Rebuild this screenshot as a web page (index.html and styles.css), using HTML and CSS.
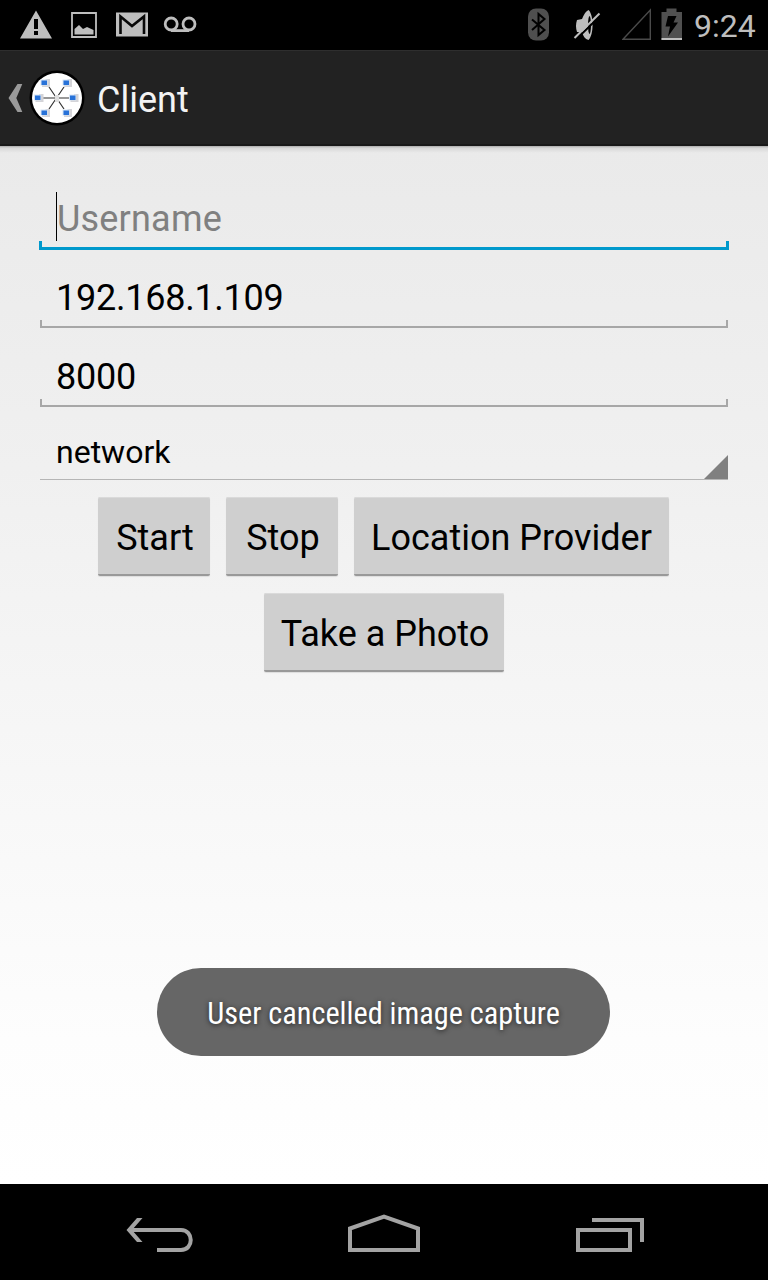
FILE: index.html
```
<!DOCTYPE html>
<html lang="en">
<head>
<meta charset="utf-8">
<title>Client</title>
<link rel="stylesheet" href="styles.css">
</head>
<body>
<div class="screen">
  <header class="status-bar">
    <div class="notifications">
      <svg width="34" height="50" viewBox="19 0 34 50"><path fill="#bebebe" fill-rule="evenodd" d="M36 10.500 52 38.500H20ZM34 19v10h4V19ZM34 31v4h4v-4Z"/></svg>
      <svg width="28" height="50" viewBox="70 0 28 50"><path fill="none" stroke="#bebebe" stroke-width="1.800" d="M72 13h24v24H72Z"/><path fill="#bebebe" d="M74.500 34.500V29l4.500-4 4 4 4-2 6.500 3v4.500Z"/></svg>
      <svg width="34" height="50" viewBox="115 0 34 50"><path fill="#bebebe" d="M116 12.500h32v24h-32Z"/><path fill="none" stroke="#080808" stroke-width="2.600" d="M120.500 34V16.500L132 26l12-9.500V34"/></svg>
      <svg width="34" height="50" viewBox="163 0 34 50"><g fill="none" stroke="#bebebe" stroke-width="2.800"><circle cx="171.200" cy="24" r="6"/><circle cx="189" cy="24" r="6"/><path d="M171 30.600h18"/></g></svg>
    </div>
    <div class="system">
      <svg width="22" height="50" viewBox="528 0 22 50"><rect x="528" y="8.500" width="21" height="32" rx="8" fill="#4f4f4f"/><path fill="none" stroke="#000" stroke-width="2" d="m532 19.500 12.500 10.500-6 5V14l6 5-12.500 11"/></svg>
      <svg width="28" height="50" viewBox="573 0 28 50"><path fill="#bebebe" d="M577 20l5-1c2-5 4-8 6.500-9 5.500 5 5.500 25 0 30-3.500-1-5.500-4-6.500-8h-5q-2-6 0-12Z"/><ellipse cx="589.500" cy="25" rx="1.500" ry="9" fill="#000"/><path stroke="#000" stroke-width="2" d="m576 39.500 25-24.500"/><path stroke="#bebebe" stroke-width="2" d="m574.500 38 25-24.500"/></svg>
      <svg width="30" height="50" viewBox="622 0 30 50"><path fill="none" stroke="#4a4a4a" stroke-width="1.400" d="M623 39.300 650.300 10v29.300Z"/></svg>
      <svg width="22" height="50" viewBox="661 0 22 50"><path fill="#505050" d="M661.500 12h5V8.500h10V12h5.500v28h-20.500Z"/><path fill="#bebebe" d="M661.500 38h20.500v2h-20.500Z"/><path fill="#000" d="M668 16h8.500l-3 6.500h4.500L668 36.500l2-10h-4.500Z"/></svg>
      <span class="clock">9:24</span>
    </div>
  </header>
  <div class="action-bar">
    <svg class="up" width="16" height="32" viewBox="8 82 16 32"><path fill="#9a9a9a" d="M17.500 84h4.800l-6 14 6 14h-4.800L8.500 98Z"/></svg>
    <svg class="logo" width="56" height="56" viewBox="0 0 56 56">
      <defs>
        <g id="pc"><path fill="#d4d4d8" d="M0-4h4.500v8h-8V2H0Z"/><path fill="#d7e5f5" d="M-5-3.500h7v6h-7Z"/><path fill="#2872d8" d="M-4-2.500h5.500v4.500h-5.500Z"/></g>
      </defs>
      <circle cx="28" cy="28" r="27.500" fill="#000"/><circle cx="28" cy="28" r="25" fill="#fff"/>
      <path fill="none" stroke="#333" stroke-width="1.200" d="M13 28h29M20 17l15 22M35 17 20 39"/>
      <path fill="#dedede" d="M26 25h4v7h-4Z"/>
      <use href="#pc" x="16.500" y="13"/><use href="#pc" x="38.500" y="13"/><use href="#pc" x="10" y="28"/><use href="#pc" x="45" y="28"/><use href="#pc" x="16.500" y="43"/><use href="#pc" x="38.500" y="43"/>
    </svg>
    <h1 class="title">Client</h1>
  </div>
  <main class="content">
    <div class="field focused"><span class="value"><i class="caret"></i><span class="hint">Username</span></span><div class="line"></div></div>
    <div class="field address"><span class="value ip">192.168.1.109</span><div class="line"></div></div>
    <div class="field"><span class="value port">8000</span><div class="line"></div></div>
    <div class="spinner"><span class="choice">network</span><svg width="24" height="24" viewBox="0 0 24 24"><path fill="#808080" d="M24 0v24H0Z"/></svg></div>
    <div class="buttons">
      <button class="btn small">Start</button>
      <button class="btn small">Stop</button>
      <button class="btn provider">Location Provider</button>
    </div>
    <div class="buttons second"><button class="btn photo">Take a Photo</button></div>
    <div class="toast"><span class="toast-text">User cancelled image capture</span></div>
  </main>
  <nav class="nav-bar">
    <svg width="68" height="40" viewBox="126 1215 68 40"><path fill="none" stroke="#a3a3a3" stroke-width="4" d="M129 1230h52c13 0 13 20 0 20h-24"/><path fill="#a3a3a3" d="M137 1218h5.500l-10.500 12 10.500 12H137l-10.500-12Z"/></svg>
    <svg width="72" height="40" viewBox="348 1213 72 40"><path fill="none" stroke="#a3a3a3" stroke-width="4" d="M350 1250v-21.500l34-12 34 12v21.500Z"/></svg>
    <svg width="68" height="40" viewBox="576 1215 68 40"><path fill="none" stroke="#a3a3a3" stroke-width="4" d="M578 1230h52v20h-52ZM592 1220h50v22"/></svg>
  </nav>
</div>
</body>
</html>
```
FILE: styles.css
```
* { box-sizing: border-box; }
body { margin: 0; font-family: Roboto, "Noto Sans", sans-serif; }
svg { display: block; flex: none; }
.screen { width: 768px; height: 1280px; display: flex; flex-direction: column; overflow: hidden; }
.status-bar { height: 50px; flex: none; background: #000; display: flex; justify-content: space-between; padding: 0 12px 0 19px; }
.notifications { display: flex; }
.notifications svg:nth-child(2) { margin-left: 17px; }
.notifications svg:nth-child(3) { margin-left: 17px; }
.notifications svg:nth-child(4) { margin-left: 14px; }
.system { display: flex; width: 228px; }
.system svg:nth-child(2) { margin-left: 23px; }
.system svg:nth-child(3) { margin-left: 21px; }
.system svg:nth-child(4) { margin-left: 9px; }
.clock { color: #bebebe; font-size: 32px; line-height: 52px; margin-left: 11px; white-space: nowrap; }
.action-bar { height: 96px; flex: none; display: flex; align-items: center; padding: 0 0 0 8px; background: #222; border-top: 1px solid #2e2e2e; border-bottom: 2px solid #191919; }
.logo { margin-left: 5px; }
.title { margin: 5px 0 0 12px; color: #f3f3f3; font-weight: 400; font-size: 36px; line-height: 44px; }
.content { flex: 1; display: flex; flex-direction: column; padding: 25px 40px 0; background: linear-gradient(#aaa 0, #d8d8d8 2px, rgba(230,230,230,0) 7px), linear-gradient(#eaeaea 0, #f0f0f0 31%, #f6f6f6 56%, #fdfdfd 86%, #fff); }
.field { height: 79px; flex: none; display: flex; flex-direction: column; justify-content: flex-end; color: #000; font-size: 36px; }
.address { height: 78px; }
.value { height: 48px; line-height: 52px; padding-left: 16px; display: flex; white-space: nowrap; }
.ip { letter-spacing: -0.25px; }
.port { letter-spacing: -0.2px; }
.line { height: 8px; border: solid #a7a7a7; border-width: 0 2px 2px; }
.focused .line { height: 9px; margin: 0 -1px; border-color: #0099cc; border-width: 0 3px 3px; }
.focused .value { height: 50px; line-height: 56px; }
.caret { width: 1px; height: 49px; margin-top: 1px; background: #000; }
.hint { color: #808080; letter-spacing: 0.2px; }
.spinner { height: 73px; flex: none; display: flex; justify-content: space-between; align-items: flex-end; border-bottom: 1px solid #b5b5b5; }
.choice { padding: 0 0 7px 16px; font-size: 32px; line-height: 40px; color: #000; }
.buttons { display: flex; justify-content: center; gap: 16px; padding: 17px 1px 0 0; }
.second { padding-right: 0; }
.btn { height: 79px; padding: 4px 0 0; border: 0; border-bottom: 2px solid #999; border-radius: 2px; background: #cfcfcf; box-shadow: 0 1px 1px #ddd, inset 0 1px #dadada; font: 36px/44px Roboto, sans-serif; color: #000; white-space: nowrap; }
.small { width: 112px; padding-left: 2px; }
.provider { width: 315px; }
.photo { width: 240px; padding-left: 2px; }
.toast { width: 453px; height: 88px; margin: 296px 0 0 117px; border-radius: 44px; background: #666; color: #fff; display: flex; align-items: center; justify-content: center; }
.toast-text { font-family: "Roboto Condensed", Roboto, sans-serif; font-stretch: condensed; font-size: 32px; line-height: 40px; white-space: nowrap; text-shadow: 0 1px 5px #222; padding-top: 2px; transform: scaleX(0.945); }
.nav-bar { height: 96px; flex: none; display: flex; align-items: flex-start; background: #000; padding: 31px 0 0 126px; }
.nav-bar svg:nth-child(2) { margin: -2px 156px 0 154px; }
```
